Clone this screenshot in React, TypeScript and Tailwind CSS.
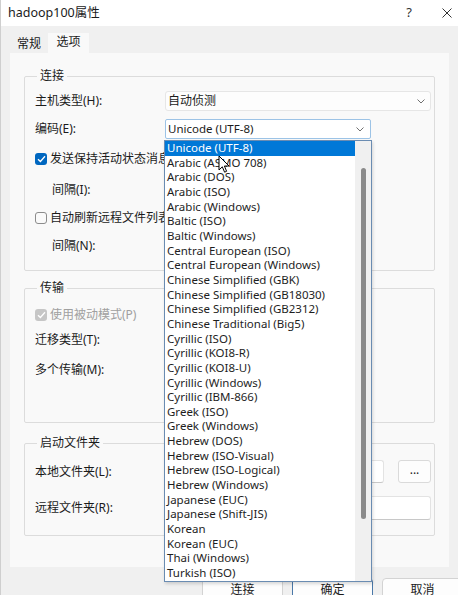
import React from 'react';

const encodings = [
  'Unicode (UTF-8)',
  'Arabic (ASMO 708)',
  'Arabic (DOS)',
  'Arabic (ISO)',
  'Arabic (Windows)',
  'Baltic (ISO)',
  'Baltic (Windows)',
  'Central European (ISO)',
  'Central European (Windows)',
  'Chinese Simplified (GBK)',
  'Chinese Simplified (GB18030)',
  'Chinese Simplified (GB2312)',
  'Chinese Traditional (Big5)',
  'Cyrillic (ISO)',
  'Cyrillic (KOI8-R)',
  'Cyrillic (KOI8-U)',
  'Cyrillic (Windows)',
  'Cyrillic (IBM-866)',
  'Greek (ISO)',
  'Greek (Windows)',
  'Hebrew (DOS)',
  'Hebrew (ISO-Visual)',
  'Hebrew (ISO-Logical)',
  'Hebrew (Windows)',
  'Japanese (EUC)',
  'Japanese (Shift-JIS)',
  'Korean',
  'Korean (EUC)',
  'Thai (Windows)',
  'Turkish (ISO)',
];

const Chevron = () => (
  <svg width="8" height="5" viewBox="0 0 8 5" fill="none">
    <path d="M0.5 0.5 L4 4 L7.5 0.5" stroke="#707070" strokeWidth="1" />
  </svg>
);

const Check = ({ color = '#fff' }: { color?: string }) => (
  <svg width="9" height="8" viewBox="0 0 9 8" fill="none">
    <path d="M1 4.2 L3.4 6.5 L8 1.3" stroke={color} strokeWidth="1.3" />
  </svg>
);

const Label = ({ children, indent = false }: { children: React.ReactNode; indent?: boolean }) => (
  <span className={`w-[130px] shrink-0 ${indent ? 'pl-[17px]' : ''}`}>{children}</span>
);

export default function App() {
  return (
    <div
      className="relative w-[458px] h-[595px] overflow-hidden bg-[#f0f0f0] border-l border-[#cfcfcf] text-[12px] text-[#1b1b1b]"
      style={{ fontFamily: '"Noto Sans", "Noto Sans CJK SC", sans-serif' }}
    >
      {/* 标题栏 */}
      <div className="h-[26px] bg-white flex items-center pl-[7px]">
        <span className="text-[12.5px]">hadoop100属性</span>
        <span className="ml-auto mr-[30px] text-[13px] text-[#333]">?</span>
        <svg className="mr-[6px]" width="10" height="10" viewBox="0 0 10 10">
          <path d="M0.5 0.5 L9.5 9.5 M9.5 0.5 L0.5 9.5" stroke="#333" strokeWidth="1" />
        </svg>
      </div>

      {/* タブ */}
      <div className="h-[27px] flex items-end pl-[9px]">
        <div className="w-[38px] h-[20px] flex items-center justify-center pt-[2px]">常规</div>
        <div className="w-[41px] h-[20px] bg-[#f9f9f9] flex items-center justify-center pb-[2px]">选项</div>
      </div>

      {/* パネル */}
      <div className="mx-[9px] h-[514px] bg-[#f9f9f9] pt-[15px] px-[14px] flex flex-col">
        <fieldset className="border border-[#dcdcdc] rounded-[2px] pl-[10px] pb-[14px]">
          <legend className="ml-[2px] px-[3px] leading-[16px]">连接</legend>
          <div className="mt-[7px] h-[20px] flex items-center">
            <Label>主机类型(H):</Label>
            <div className="w-[266px] h-[20px] bg-[#fdfdfd] border border-[#e6e6e6] rounded-[3px] flex items-center pl-[2px] pr-[5px]">
              <span>自动侦测</span>
              <span className="ml-auto"><Chevron /></span>
            </div>
          </div>
          <div className="mt-[8px] h-[20px] flex items-center">
            <Label>编码(E):</Label>
            <div className="w-[206px] h-[20px] bg-white border border-[#9cc3e6] rounded-[2px] flex items-center pl-[2px] pr-[6px]">
              <span className="text-[11.5px]">Unicode (UTF-8)</span>
              <span className="ml-auto"><Chevron /></span>
            </div>
          </div>
          <div className="mt-[12px] h-[16px] flex items-center gap-[3px]">
            <span className="w-[12px] h-[12px] rounded-[3px] bg-[#0067c0] flex items-center justify-center">
              <Check />
            </span>
            <span>发送保持活动状态消息(A)</span>
          </div>
          <div className="mt-[13px] h-[20px] flex items-center">
            <Label indent>间隔(I):</Label>
            <div className="w-[100px] h-[20px] bg-white border border-[#e0e0e0] rounded-[3px]" />
          </div>
          <div className="mt-[10px] h-[16px] flex items-center gap-[3px]">
            <span className="w-[12px] h-[12px] rounded-[3px] border border-[#8c8c8c] bg-[#fafafa]" />
            <span>自动刷新远程文件列表(U)</span>
          </div>
          <div className="mt-[10px] h-[20px] flex items-center">
            <Label indent>间隔(N):</Label>
            <div className="w-[100px] h-[20px] bg-white border border-[#e0e0e0] rounded-[3px]" />
          </div>
        </fieldset>

        <fieldset className="mt-[9px] border border-[#dcdcdc] rounded-[2px] pl-[10px] pb-[42px]">
          <legend className="ml-[2px] px-[3px] leading-[16px]">传输</legend>
          <div className="mt-[11px] h-[16px] flex items-center gap-[3px]">
            <span className="w-[12px] h-[12px] rounded-[3px] bg-[#c6c6c6] flex items-center justify-center">
              <Check />
            </span>
            <span className="text-[#a0a0a0]">使用被动模式(P)</span>
          </div>
          <div className="mt-[7px] h-[20px] flex items-center">
            <Label>迁移类型(T):</Label>
            <div className="w-[150px] h-[20px] bg-white border border-[#e0e0e0] rounded-[3px]" />
          </div>
          <div className="mt-[10px] h-[20px] flex items-center">
            <Label>多个传输(M):</Label>
            <div className="w-[150px] h-[20px] bg-white border border-[#e0e0e0] rounded-[3px]" />
          </div>
        </fieldset>

        <fieldset className="mt-[12px] border border-[#dcdcdc] rounded-[2px] pl-[10px] pb-[15px]">
          <legend className="ml-[2px] px-[3px] leading-[16px]">启动文件夹</legend>
          <div className="mt-[9px] h-[23px] flex items-center">
            <Label>本地文件夹(L):</Label>
            <div className="w-[219px] h-[23px] bg-white border border-[#e3e3e3] border-b-[#c8c8c8] rounded-[3px]" />
            <div className="ml-[14px] w-[33px] h-[23px] bg-[#fdfdfd] border border-[#dadada] rounded-[3px] flex items-center justify-center leading-none pb-[3px]">
              ...
            </div>
          </div>
          <div className="mt-[13px] h-[24px] flex items-center">
            <Label>远程文件夹(R):</Label>
            <div className="w-[266px] h-[24px] bg-white border border-[#e3e3e3] border-b-[#c8c8c8] rounded-[3px]" />
          </div>
        </fieldset>
      </div>

      {/* 按钮 */}
      <div className="mt-[11px] flex gap-[9px] pl-[201px]">
        <div className="w-[81px] h-[24px] shrink-0 bg-[#fdfdfd] border border-[#d3d3d3] rounded-[4px] flex items-center justify-center">连接</div>
        <div className="w-[81px] h-[24px] shrink-0 bg-[#fdfdfd] border border-[#4a78a8] rounded-[4px] flex items-center justify-center">确定</div>
        <div className="w-[81px] h-[24px] shrink-0 bg-[#fdfdfd] border border-[#d3d3d3] rounded-[4px] flex items-center justify-center">取消</div>
      </div>

      {/* 下拉列表 */}
      <div className="absolute left-[163px] top-[140px] w-[208px] h-[442px] bg-white border border-[#6a8cb2] flex shadow-[1px_2px_3px_rgba(0,0,0,0.15)]">
        <ul className="flex-1 text-[11.5px]">
          {encodings.map((name, i) => (
            <li
              key={name}
              className={`h-[14.66px] leading-[14.66px] pl-[2px] whitespace-nowrap ${
                i === 0 ? 'bg-[#0078d7] text-white' : 'text-[#1e1e1e]'
              }`}
            >
              {name}
            </li>
          ))}
        </ul>
        <div className="w-[16px] bg-[#f0f0f0] flex justify-center pt-[27px]">
          <div className="w-[5px] h-[351px] rounded-full bg-[#8a8a8a]" />
        </div>
      </div>

      {/* 鼠标指针 */}
      <svg className="absolute left-[217px] top-[155px]" width="12" height="19" viewBox="0 0 12 19">
        <path d="M1 1 L1 15 L4.3 11.8 L6.6 17.2 L8.6 16.3 L6.4 11 L11 11 Z" fill="#fff" stroke="#000" strokeWidth="1" />
      </svg>
    </div>
  );
}
